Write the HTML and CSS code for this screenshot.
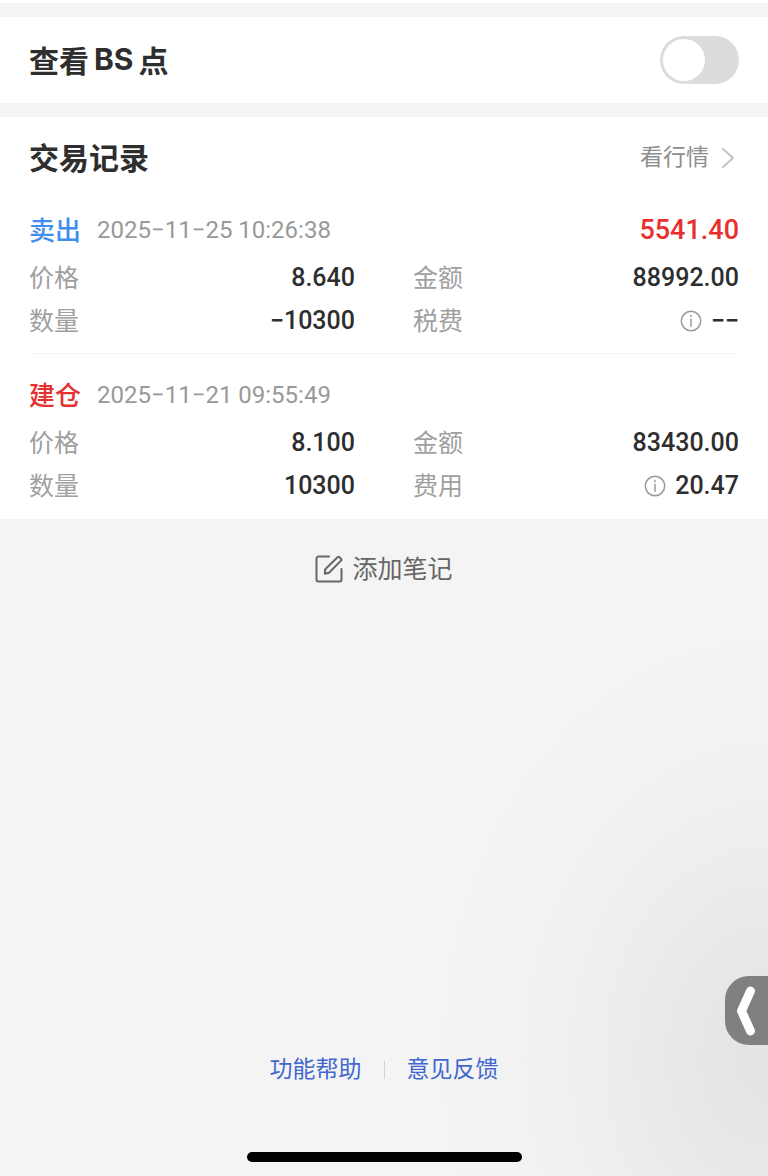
FILE: index.html
```html
<!DOCTYPE html>
<html lang="zh-CN">
<head>
<meta charset="utf-8">
<meta name="viewport" content="width=device-width, initial-scale=1">
<title>交易记录</title>
<link rel="stylesheet" href="styles.css">
</head>
<body>
<main class="page">
  <section class="switch-row">
    <label class="title mixed" for="bs"><span>查看</span><span class="latin">BS</span><span>点</span></label>
    <input class="switch" type="checkbox" role="switch" id="bs">
  </section>

  <section class="records">
    <header class="records-head">
      <h2 class="title">交易记录</h2>
      <a class="more" href="#quotes">看行情
        <svg class="chevron" viewBox="0 0 14 22" aria-hidden="true"><path d="M2 2l10 9-10 9"/></svg>
      </a>
    </header>

    <article class="record">
      <div class="record-head">
        <span class="kind sell">卖出</span>
        <time class="time" datetime="2025-11-25T10:26:38">2025−11−25 10:26:38</time>
        <span class="profit">5541.40</span>
      </div>
      <dl class="facts">
        <div class="fact"><dt>价格</dt><dd>8.640</dd></div>
        <div class="fact"><dt>金额</dt><dd>88992.00</dd></div>
        <div class="fact"><dt>数量</dt><dd>−10300</dd></div>
        <div class="fact"><dt>税费</dt><dd>
          <button class="info" type="button" aria-label="税费说明"><svg viewBox="0 0 22 22" aria-hidden="true"><circle cx="11" cy="11" r="9.7"/><path d="M11 9.2v7M11 5.6v1"/></svg></button>−−</dd></div>
      </dl>
    </article>

    <article class="record">
      <div class="record-head">
        <span class="kind buy">建仓</span>
        <time class="time" datetime="2025-11-21T09:55:49">2025−11−21 09:55:49</time>
      </div>
      <dl class="facts">
        <div class="fact"><dt>价格</dt><dd>8.100</dd></div>
        <div class="fact"><dt>金额</dt><dd>83430.00</dd></div>
        <div class="fact"><dt>数量</dt><dd>10300</dd></div>
        <div class="fact"><dt>费用</dt><dd>
          <button class="info" type="button" aria-label="费用说明"><svg viewBox="0 0 22 22" aria-hidden="true"><circle cx="11" cy="11" r="9.7"/><path d="M11 9.2v7M11 5.6v1"/></svg></button>20.47</dd></div>
      </dl>
    </article>
  </section>

  <section class="lower">
    <button class="note" type="button">
      <svg viewBox="0 0 28 28" aria-hidden="true"><path d="M14 1.500H3.500a2 2 0 0 0-2 2v21a2 2 0 0 0 2 2h21a2 2 0 0 0 2-2V14"/><path d="M9.800 18.800l.4-4.600L22.800 2q.7-.6 1.400 0l2 2q.6.700 0 1.400L14 17.800z"/></svg>
      <span>添加笔记</span>
    </button>
    <nav class="links">
      <a href="#help">功能帮助</a>
      <span class="bar"></span>
      <a href="#feedback">意见反馈</a>
    </nav>
    <div class="home"></div>
  </section>
</main>
<button class="drawer" type="button" aria-label="展开">
  <svg viewBox="0 0 20 50" aria-hidden="true"><path d="M14.500 5L5.500 25l9 20"/></svg>
</button>
</body>
</html>
```
FILE: styles.css
```css
* { box-sizing: border-box; }

body {
  margin: 0;
  background: #f4f4f4;
  color: #2e2e2e;
  font-family: Roboto, "Noto Sans CJK SC", sans-serif;
}

button {
  padding: 0;
  border: 0;
  background: none;
  font: inherit;
  color: inherit;
}

a { text-decoration: none; }

svg {
  fill: none;
  stroke: currentColor;
  stroke-linecap: round;
  stroke-linejoin: round;
}

.page {
  display: flex;
  flex-direction: column;
  min-height: 100vh;
  border-top: 3px solid #fff;
}

.switch-row {
  display: flex;
  align-items: center;
  justify-content: space-between;
  margin: 14px 0;
  padding: 19px 29px;
  background: #fff;
}

.title {
  margin: 0;
  padding-bottom: 3px;
  font-family: "Noto Sans CJK SC", sans-serif;
  font-size: 30px;
  font-weight: 700;
  line-height: 39px;
}

.mixed {
  display: flex;
  gap: 5px;
  padding-bottom: 1px;
}

.latin { font-family: Inter, sans-serif; }

.switch {
  appearance: none;
  display: flex;
  width: 79px;
  height: 48px;
  margin: 0;
  padding: 3px;
  border-radius: 24px;
  background: #dcdcdc;
}

.switch::before {
  content: "";
  width: 42px;
  height: 42px;
  border-radius: 50%;
  background: #fff;
}

.switch:checked {
  justify-content: flex-end;
  background: #3f8ef0;
}

.records {
  padding-bottom: 1px;
  background: #fff;
}

.records-head {
  display: flex;
  align-items: center;
  justify-content: space-between;
  padding: 20px 33px 10px 29px;
}

.more {
  display: flex;
  align-items: center;
  gap: 12px;
  color: #8e8e8e;
  font-size: 23px;
  line-height: 42px;
}

.chevron {
  width: 14px;
  height: 22px;
  color: #c4c4c4;
  stroke-width: 2;
}

.record {
  margin: 0 29px;
  padding: 15px 0 11px;
}

.record + .record { border-top: 1px solid #f3f3f3; }

.record-head {
  display: flex;
  align-items: center;
  height: 52px;
}

.kind {
  margin-right: 16px;
  padding-bottom: 3px;
  font-size: 26px;
  font-weight: 500;
}

.sell { color: #3f8ef0; }
.buy { color: #e8302e; }

.time {
  color: #999;
  font-size: 24px;
}

.profit {
  margin-left: auto;
  color: #e8302e;
  font-size: 27px;
  font-weight: 500;
}

.facts {
  display: grid;
  grid-template-columns: 1fr 1fr;
  column-gap: 58px;
  margin: 0;
}

.fact {
  display: flex;
  align-items: center;
  justify-content: space-between;
  height: 43px;
}

.fact dt {
  padding-bottom: 3px;
  color: #a0a0a0;
  font-size: 25px;
}

.fact dd {
  display: flex;
  align-items: center;
  gap: 9px;
  margin: 0;
  font-size: 25px;
  font-weight: 500;
}

.info {
  display: flex;
  color: #999;
}

.info svg {
  width: 22px;
  height: 22px;
  stroke-width: 1.5;
}

.lower {
  display: flex;
  flex: 1;
  flex-direction: column;
  align-items: center;
  padding: 28px 29px 14px;
  background: radial-gradient(ellipse 340px 440px at 100% 82%, #e3e3e3 0%, #e8e8e8 25%, #efefef 55%, #f3f3f3 80%, #f4f4f4 100%);
}

.note {
  display: flex;
  align-items: center;
  gap: 9px;
  color: #666;
  font-size: 25px;
  line-height: 40px;
}

.note span { padding-top: 3px; }

.note svg {
  width: 28px;
  height: 28px;
  stroke-width: 2;
}

.links {
  display: flex;
  align-items: center;
  gap: 22px;
  margin-top: auto;
  font-size: 23px;
  line-height: 34px;
}

.links a { color: #4068cf; }

.bar {
  width: 1px;
  height: 18px;
  background: #d2d2d2;
}

.home {
  width: 275px;
  height: 10px;
  margin-top: 65px;
  border-radius: 5px;
  background: #000;
}

.drawer {
  position: fixed;
  right: 0;
  bottom: 131px;
  display: flex;
  align-items: center;
  width: 43px;
  height: 69px;
  padding-left: 11px;
  border-radius: 24px 0 0 24px;
  background: #808080;
  color: #fff;
}

.drawer svg {
  width: 20px;
  height: 50px;
  stroke-width: 9;
}
```
